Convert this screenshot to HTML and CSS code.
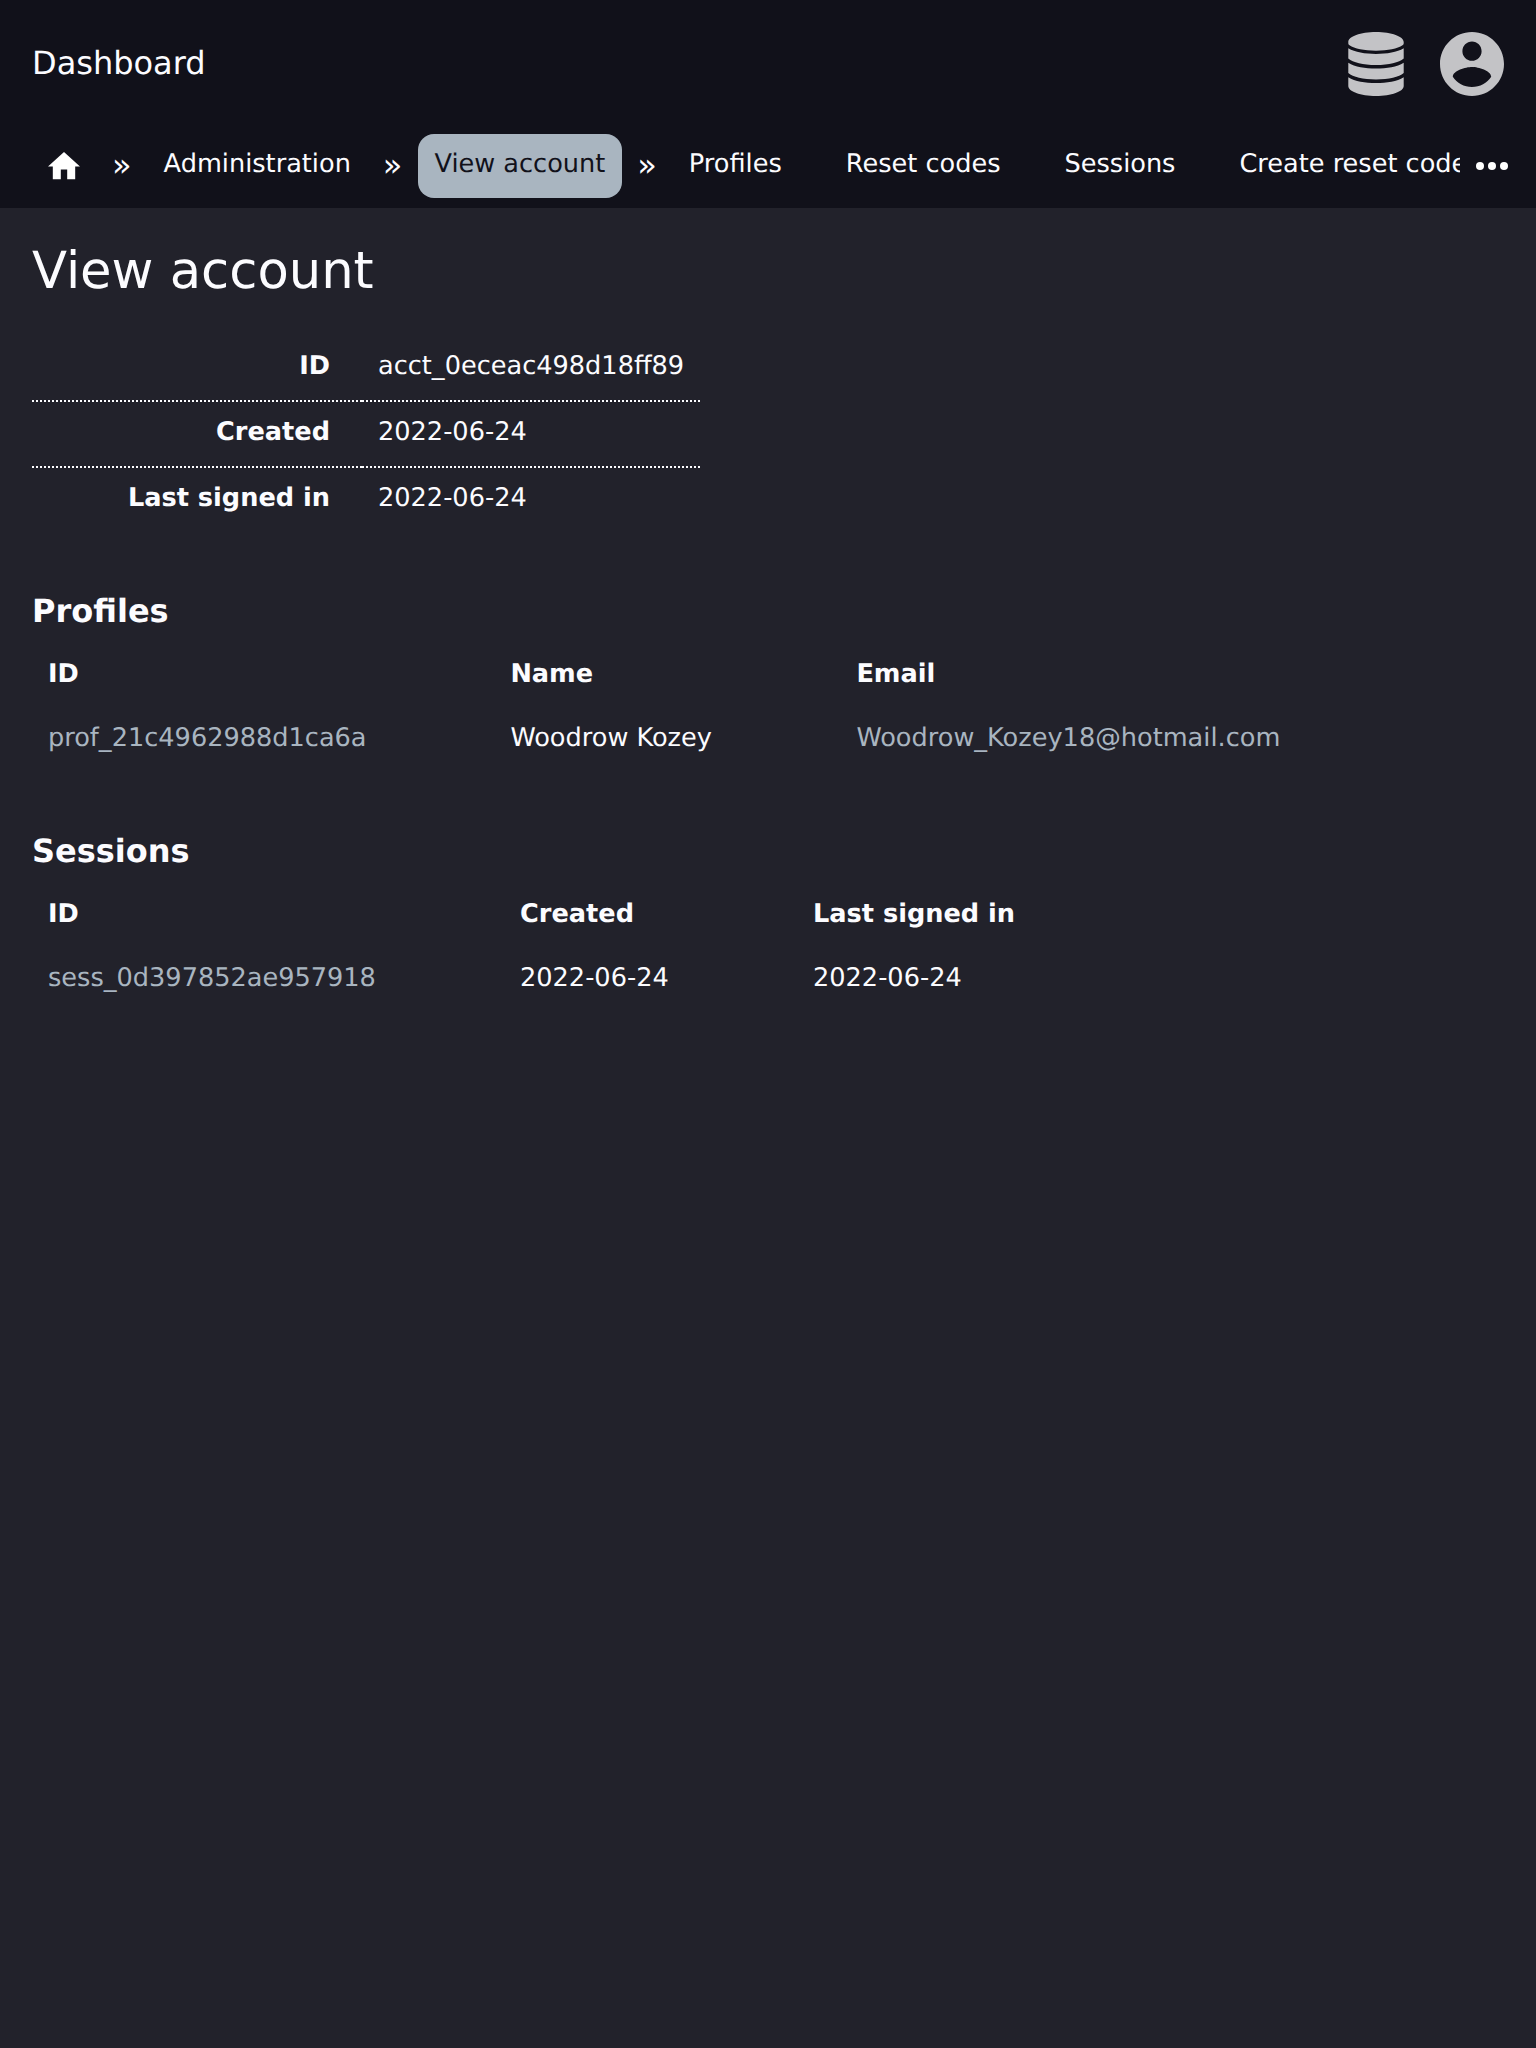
FILE: index.html
```html
<!DOCTYPE html>
<html lang="en">
<head>
<meta charset="utf-8">
<title>View account</title>
<link rel="stylesheet" href="styles.css">
</head>
<body>
<header class="header">
  <div class="topbar">
    <a class="brand">Dashboard</a>
    <div class="menus">
      <svg class="icon-db" viewBox="0 0 56 64"><path d="M28 0C43.500 0 55.700 4.500 55.700 10V11.500C55.700 12.300 55.300 12.800 54.500 13.300C49.500 16.800 40 18.700 28 18.700S6.500 16.800 1.500 13.300C.7 12.800 .3 12.300 .3 11.500V10C.3 4.500 12.500 0 28 0z"/><path d="M.3 16.300C7 20.300 17 22 28 22S49 20.300 55.700 16.300V26.500C51 30.500 41 33 28 33S5 30.500 .3 26.500z"/><path d="M.3 30.700C7 34.800 17 36.500 28 36.500S49 34.800 55.700 30.700V41C51 45 41 47.400 28 47.400S5 45 .3 41z"/><path d="M.3 45.200C7 49.300 17 51 28 51S49 49.300 55.700 45.200V54C55.700 59.500 43.500 64 28 64S.3 59.500 .3 54z"/></svg>
      <svg class="icon-user" viewBox="2 2 20 20"><path d="M12 2C6.480 2 2 6.480 2 12s4.480 10 10 10 10-4.480 10-10S17.520 2 12 2zm0 3c1.660 0 3 1.340 3 3s-1.340 3-3 3-3-1.340-3-3 1.340-3 3-3zm0 14.200c-2.500 0-4.710-1.280-6-3.220.030-1.990 4-3.080 6-3.080 1.990 0 5.970 1.090 6 3.080-1.290 1.940-3.500 3.220-6 3.220z"/></svg>
    </div>
  </div>
  <nav class="nav">
    <div class="crumbs">
      <a class="home"><svg class="icon-home" viewBox="2 3 20 17"><path d="M10 20v-6h4v6h5v-8h3L12 3 2 12h3v8z"/></svg></a>
      <span class="sep">»</span>
      <a class="link">Administration</a>
      <span class="sep">»</span>
      <a class="link active">View account</a>
      <span class="sep">»</span>
      <div class="children">
        <a class="link">Profiles</a>
        <a class="link">Reset codes</a>
        <a class="link">Sessions</a>
        <a class="link">Create reset code</a>
      </div>
    </div>
    <svg class="icon-more" viewBox="0 0 32 8"><circle cx="4" cy="4" r="4"/><circle cx="16" cy="4" r="4"/><circle cx="28" cy="4" r="4"/></svg>
  </nav>
</header>
<main class="main">
  <h1 class="title">View account</h1>
  <table class="details">
    <tr><th>ID</th><td>acct_0eceac498d18ff89</td></tr>
    <tr><th>Created</th><td>2022-06-24</td></tr>
    <tr><th>Last signed in</th><td>2022-06-24</td></tr>
  </table>
  <section class="section">
    <h2 class="subtitle">Profiles</h2>
    <table class="list">
      <tr><th class="profile-id">ID</th><th class="profile-name">Name</th><th>Email</th></tr>
      <tr><td><a class="ref">prof_21c4962988d1ca6a</a></td><td>Woodrow Kozey</td><td><a class="ref">Woodrow_Kozey18@hotmail.com</a></td></tr>
    </table>
  </section>
  <section class="section">
    <h2 class="subtitle">Sessions</h2>
    <table class="list">
      <tr><th class="session-id">ID</th><th class="session-created">Created</th><th>Last signed in</th></tr>
      <tr><td><a class="ref">sess_0d397852ae957918</a></td><td>2022-06-24</td><td>2022-06-24</td></tr>
    </table>
  </section>
</main>
</body>
</html>
```
FILE: styles.css
```css
* { box-sizing: border-box; }
body {
  margin: 0;
  min-height: 100vh;
  background: #22222b;
  color: #fcfcff;
  font: 25.6px/32px "DejaVu Sans", sans-serif;
  text-rendering: geometricPrecision;
}
.header { height: 208px; background: #11111a; }
.topbar {
  display: flex;
  justify-content: space-between;
  align-items: center;
  height: 128px;
  padding: 0 32px;
}
.brand { padding-bottom: 2px; font-size: 32px; line-height: 40px; }
.menus { display: flex; gap: 36px; fill: #c3c3c6; }
.icon-db { width: 56px; height: 64px; }
.icon-user { width: 64px; height: 64px; }
.nav {
  display: flex;
  align-items: center;
  height: 76px;
  padding: 0 28px 0 32px;
  fill: #fff;
}
.crumbs {
  display: flex;
  align-items: center;
  flex: 1;
  min-width: 0;
  gap: 16px;
  overflow: hidden;
  white-space: nowrap;
}
.home { padding: 0 16px; }
.icon-home { display: block; width: 32px; height: 27.2px; }
.sep { padding-bottom: 2px; font-size: 32px; line-height: 32px; }
.children { display: flex; gap: 32px; }
.link {
  height: 64px;
  padding: 16px;
  border-radius: 16px;
  line-height: 29px;
}
.active {
  margin-right: -0.5px;
  padding-right: 16.5px;
  background: #a9b5c0;
  color: #11111a;
}
.icon-more { width: 32px; height: 8px; margin-left: 16px; flex: none; }
.main { padding: 32px; }
.title { margin: 0; font-size: 51.2px; font-weight: 400; line-height: 62px; }
.details { margin-top: 34px; margin-bottom: -3px; border-collapse: collapse; }
.details th { width: 330px; padding: 14px 32px 18px 16px; text-align: right; white-space: nowrap; }
.details td { padding: 14px 16px 18px; }
.details tr + tr > * { border-top: 2px dotted #fcfcff; }
.section { margin-top: 63px; }
.subtitle { margin: 0; font-size: 32px; line-height: 38px; }
.list { margin-top: 12px; margin-bottom: -1px; border-collapse: collapse; }
.list th, .list td { height: 64px; padding: 16px; text-align: left; }
.profile-id { width: 462.4px; }
.profile-name { width: 346px; }
.session-id { width: 472px; }
.session-created { width: 293px; }
.ref { color: #a9b5c0; }
```
